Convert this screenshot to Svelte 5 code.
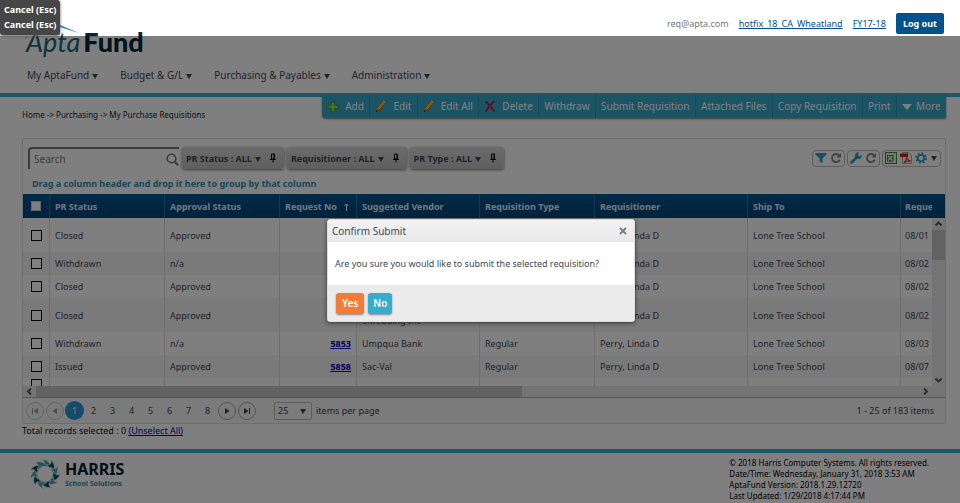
<script>
  const menus = ['My AptaFund', 'Budget & G/L', 'Purchasing & Payables', 'Administration'];
  const actions = [
    { label: 'Add', icon: 'add' },
    { label: 'Edit', icon: 'edit' },
    { label: 'Edit All', icon: 'edit' },
    { label: 'Delete', icon: 'delete' },
    { label: 'Withdraw' },
    { label: 'Submit Requisition' },
    { label: 'Attached Files' },
    { label: 'Copy Requisition' },
    { label: 'Print' },
    { label: 'More', icon: 'more' }
  ];
  const filters = ['PR Status : ALL', 'Requisitioner : ALL', 'PR Type : ALL'];
  const rows = [
    { status: 'Closed', approval: 'Approved', date: '08/01', tall: true },
    { status: 'Withdrawn', approval: 'n/a', date: '08/02' },
    { status: 'Closed', approval: 'Approved', date: '08/02' },
    { status: 'Closed', approval: 'Approved', vendor: 'Shredding Inc', date: '08/02', tall: true },
    { status: 'Withdrawn', approval: 'n/a', no: '5853', vendor: 'Umpqua Bank', type: 'Regular', date: '08/03' },
    { status: 'Issued', approval: 'Approved', no: '5858', vendor: 'Sac-Val', type: 'Regular', date: '08/07' }
  ];
  const pages = [1, 2, 3, 4, 5, 6, 7, 8];
  const blades = Array.from({ length: 11 }, (_, i) => i);
</script>

{#snippet pin()}
  <svg class="pin" width="8" height="10" viewBox="0 0 8 10"><path d="M2.500 1h3v5h-3zM1 6.500h6M4 6.500v3M5 1v5" fill="none" stroke="#000" /></svg>
{/snippet}

{#snippet refresh()}
  <svg width="12" height="12" viewBox="0 0 13 13"><path d="M10.200 4A4.400 4.400 0 1 0 10.600 8.400" fill="none" stroke="#858585" stroke-width="2" /><path d="M12 1v5H7z" fill="#858585" /></svg>
{/snippet}

<div class="page">
  <header>
    <div class="account">
      <span>req@apta.com</span>
      <a href="#site">hotfix_18_CA_Wheatland</a>
      <a href="#year">FY17-18</a>
      <button class="logout">Log out</button>
    </div>
    <div class="logo">
      <span class="apta">Apta</span><span class="fund">Fund</span>
      <svg class="swoosh" width="58" height="26" viewBox="0 0 58 26"><path d="M0 20Q8 6 24 0L54 13 24 4Q8 10 1 17Z" fill="#3d93a8" /></svg>
    </div>
    <nav>
      {#each menus as m}<a href="#menu">{m}<i class="caret"></i></a>{/each}
    </nav>
  </header>

  <div class="subhead">
    <div class="crumbs">Home -&gt; Purchasing -&gt; My Purchase Requisitions</div>
    <div class="actions">
      {#each actions as a}
        <button>
          {#if a.icon === 'add'}
            <svg width="12" height="12" viewBox="0 0 12 12"><path d="M4.300 1h3.400v3.300H11v3.400H7.700V11H4.300V7.700H1V4.300h3.300z" fill="#8fdc55" stroke="#4a9a28" /></svg>
          {:else if a.icon === 'edit'}
            <svg width="12" height="13" viewBox="0 0 12 13"><path d="M1 12l1-4L7.500 1.500l2.500 2L4.500 10z" fill="#f2a81d" stroke="#a86a10" stroke-width=".7" /><path d="M7.500 1.500L8.500 .3l2.500 2-1 1.200z" fill="#e8b8a0" /><path d="M1 12l.5-2 1.500 1z" fill="#222" /><path d="M3 8.500l5.500-6" stroke="#ffe07a" /></svg>
          {:else if a.icon === 'delete'}
            <svg width="12" height="13" viewBox="0 0 12 13"><path d="M1.500 1.500Q6 5 10.500 12M10.500 1Q5 6 1.500 11.500" fill="none" stroke="#d4143c" stroke-width="2" /></svg>
          {:else if a.icon === 'more'}
            <svg width="10" height="6" viewBox="0 0 10 6"><path d="M0 0h10L5 6z" fill="#fff" /></svg>
          {/if}
          <span>{a.label}</span>
        </button>
      {/each}
    </div>
  </div>

  <main>
    <section class="grid">
      <div class="filters">
        <label class="search">
          <input type="text" placeholder="Search" aria-label="Search" />
          <svg width="13" height="13" viewBox="0 0 13 13"><circle cx="5.500" cy="5.500" r="4.300" fill="none" stroke="#777" stroke-width="1.600" /><path d="M8.600 8.600l3.600 3.600" stroke="#777" stroke-width="2" /></svg>
        </label>
        {#each filters as f}
          <button class="chip">{f}<i class="caret"></i>{@render pin()}</button>
        {/each}
        <div class="tools">
          <div class="tool">
            <button aria-label="Filter"><svg width="12" height="12" viewBox="0 0 12 12"><path d="M.5 1h11v1.500L7.500 6.500V11l-3-1.500v-3L.5 2.500z" fill="#2f9fc4" /></svg></button>
            <button aria-label="Clear filter">{@render refresh()}</button>
          </div>
          <div class="tool">
            <button aria-label="Settings"><svg width="12" height="12" viewBox="0 0 12 12"><path d="M1.500 10.500L7 5" stroke="#2f9fc4" stroke-width="2.600" stroke-linecap="round" /><path d="M9.500 .5A3.400 3.400 0 1 0 11.700 3L9.500 4.500 7.700 2.600z" fill="#2f9fc4" /></svg></button>
            <button aria-label="Reset settings">{@render refresh()}</button>
          </div>
          <div class="tool">
            <button aria-label="Export to Excel"><svg width="12" height="12" viewBox="0 0 12 12"><rect x=".5" y=".5" width="11" height="11" fill="#e4f3df" stroke="#3f8f3a" /><path d="M2 3h6.500v6.500H2z" fill="#2e8a2c" /><path d="M3 4l4.500 4.500M7.500 4L3 8.500" stroke="#fff" stroke-width="1.300" /></svg></button>
            <button aria-label="Export to PDF"><svg width="12" height="12" viewBox="0 0 12 12"><path d="M2.500 .5h6l3 3v8h-9z" fill="#f4f4f4" stroke="#aaa" /><path d="M0 1.500h8v3.500H0z" fill="#d8121c" /><path d="M4 10.500Q7 8 6.500 5.500 8 9 10.500 9 7 8.500 4 10.500z" fill="none" stroke="#d8121c" /></svg></button>
            <button aria-label="Options"><svg width="12" height="12" viewBox="-6 -6 12 12"><circle r="3.200" fill="none" stroke="#2f9fc4" stroke-width="1.800" /><circle r="4.900" fill="none" stroke="#2f9fc4" stroke-width="1.800" stroke-dasharray="1.920 1.920" /></svg></button>
            <i class="caret"></i>
          </div>
        </div>
      </div>
      <div class="group">Drag a column header and drop it here to group by that column</div>

      <div class="data">
        <div class="viewport">
          <table>
            <colgroup>
              <col class="c-check" /><col class="c-mid" /><col class="c-mid" /><col class="c-no" /><col class="c-vendor" /><col class="c-mid" /><col class="c-wide" /><col class="c-wide" /><col />
            </colgroup>
            <thead>
              <tr>
                <th><input type="checkbox" aria-label="Select all" /></th>
                <th>PR Status</th>
                <th>Approval Status</th>
                <th class="num">Request No
                  <svg width="5" height="8" viewBox="0 0 5 8"><path d="M2.500 8V1M.5 3l2-2 2 2" fill="none" stroke="#fff" /></svg></th>
                <th>Suggested Vendor</th>
                <th>Requisition Type</th>
                <th>Requisitioner</th>
                <th>Ship To</th>
                <th>Reque</th>
              </tr>
            </thead>
            <tbody>
              {#each rows as r}
                <tr>
                  <td><input type="checkbox" aria-label="Select row" /></td>
                  <td>{r.status}</td>
                  <td>{r.approval}</td>
                  <td class="num">{#if r.no}<a href="#req">{r.no}</a>{/if}</td>
                  <td>{#if r.tall}<br />{/if}{r.vendor ?? ''}{#if r.tall && !r.vendor}<br />{/if}</td>
                  <td>{r.type ?? ''}</td>
                  <td>Perry, Linda D</td>
                  <td>Lone Tree School</td>
                  <td>{r.date}</td>
                </tr>
              {/each}
              <tr>
                <td><input type="checkbox" aria-label="Select row" /></td>
                <td></td><td></td><td></td><td></td><td></td><td></td><td></td><td></td>
              </tr>
            </tbody>
          </table>
        </div>
        <div class="vscroll">
          <div class="cap"></div>
          <svg width="11" height="12" viewBox="0 0 11 12"><path d="M2.500 7.500l3-3 3 3" fill="none" stroke="#555" stroke-width="1.800" /></svg>
          <div class="vthumb"></div>
          <svg width="11" height="12" viewBox="0 0 11 12"><path d="M2.500 4.500l3 3 3-3" fill="none" stroke="#555" stroke-width="1.800" /></svg>
        </div>
      </div>
      <div class="hscroll">
        <svg width="13" height="11" viewBox="0 0 13 11"><path d="M8 2.500l-3 3 3 3" fill="none" stroke="#555" stroke-width="1.800" /></svg>
        <div class="htrack"><div class="hthumb"></div></div>
        <svg width="13" height="11" viewBox="0 0 13 11"><path d="M5 2.500l3 3-3 3" fill="none" stroke="#555" stroke-width="1.800" /></svg>
      </div>
      <div class="pager">
        <button class="round off" aria-label="First page"><svg width="8" height="8" viewBox="0 0 8 8"><path d="M7 1v6L2.500 4zM1 1h1v6H1z" /></svg></button>
        <button class="round off" aria-label="Previous page"><svg width="8" height="8" viewBox="0 0 8 8"><path d="M6 1v6L1.500 4z" /></svg></button>
        {#each pages as p}<button class="page-no" class:current={p === 1}>{p}</button>{/each}
        <button class="round" aria-label="Next page"><svg width="8" height="8" viewBox="0 0 8 8"><path d="M2 1v6l4.500-3z" /></svg></button>
        <button class="round" aria-label="Last page"><svg width="8" height="8" viewBox="0 0 8 8"><path d="M1 1v6l4.500-3zM6 1h1v6H6z" /></svg></button>
        <div class="size">
          <select id="size"><option>25</option></select>
          <i class="caret"></i>
        </div>
        <label for="size">items per page</label>
        <span class="range">1 - 25 of 183 items</span>
      </div>
    </section>
    <p class="total">Total records selected : 0 <a href="#unselect">(Unselect All)</a></p>
  </main>

  <footer>
    <div class="harris">
      <svg width="32" height="32" viewBox="-16 -16 32 32">
        {#each blades as b}
          <path transform="rotate({b * 32.727})" d="M-3 -15Q6 -14 6.500 -4Q3 -9 -4 -8Q2 -11.500 -3 -15Z" fill={b % 2 ? '#0b4a5c' : '#4fa3b5'} stroke="#fff" stroke-width=".6" />
        {/each}
      </svg>
      <div>
        <div class="name">HARRIS</div>
        <div class="sub">School Solutions</div>
      </div>
    </div>
    <div class="legal">
      <div>© 2018 Harris Computer Systems. All rights reserved.</div>
      <div>Date/Time: Wednesday, January 31, 2018 3:53 AM</div>
      <div>AptaFund Version: 2018.1.29.12720</div>
      <div>Last Updated: 1/29/2018 4:17:44 PM</div>
    </div>
  </footer>
</div>

<div class="shade"></div>

<div class="dialog" role="dialog" aria-labelledby="dlg-title">
  <div class="dlg-head">
    <span id="dlg-title">Confirm Submit</span>
    <button aria-label="Close"><svg width="8" height="8" viewBox="0 0 8 8"><path d="M1 1l6 6M7 1L1 7" stroke="#777d85" stroke-width="1.800" /></svg></button>
  </div>
  <div class="dlg-body">Are you sure you would like to submit the selected requisition?</div>
  <div class="dlg-foot"><button class="yes">Yes</button><button class="no">No</button></div>
</div>

<div class="tip"><div>Cancel (Esc)</div><div>Cancel (Esc)</div></div>

<style>
  :global(body) { background: #fff; }
  .page, .dialog, .tip { font-family: "Noto Sans", "Open Sans", sans-serif; font-size: 9px; line-height: 11px; color: #414853; }
  button, input, select { font: inherit; color: inherit; margin: 0; box-sizing: border-box; }
  button { border: 0; padding: 0; background: none; display: flex; align-items: center; cursor: pointer; }
  svg { display: block; flex: none; }
  .caret { display: inline-block; border: 3px solid transparent; border-top: 5px solid currentColor; border-bottom: 0; margin: 2px 0 0 3px; flex: none; }

  header { position: relative; border-bottom: 4px solid #3aaed0; }
  .account { display: flex; justify-content: flex-end; align-items: center; gap: 10px; padding: 13px 16px 0 0; height: 21px; }
  .account span { color: #777; }
  .account a { color: #00528c; }
  .logout { height: 21px; padding: 0 7px; background: #00528c; color: #fff; font-weight: 700; border-radius: 2px; }
  .logo { position: absolute; left: 26px; top: 31px; display: flex; gap: 3px; font: 27px/22px Lato, sans-serif; }
  .apta { font-style: italic; color: #14687c; }
  .fund { font-weight: 900; color: #00283c; }
  .swoosh { position: absolute; left: -1px; top: -11px; }
  nav { display: flex; align-items: flex-start; gap: 22px; padding: 34px 27px 0; font-size: 10px; line-height: 14px; height: 25px; }
  nav a { display: flex; align-items: center; color: inherit; text-decoration: none; }

  .subhead { display: flex; justify-content: space-between; align-items: flex-start; padding: 0 14px 0 22px; }
  .crumbs { padding-top: 12px; font-size: 8px; color: #222; white-space: nowrap; }
  .actions { display: flex; width: 65vw; height: 23px; margin-top: -2px; position: relative; background: #36a8cb; border-radius: 0 0 0 4px; box-shadow: 0 1px 2px #777; font-size: 10px; color: #fff; }
  .actions button { flex: auto; justify-content: center; gap: 6px; border-left: 1px solid #2e93b4; white-space: nowrap; }
  .actions button:first-child { border-left: 0; }
  .actions button:last-child { gap: 4px; }

  main { padding: 18px 14px 0 22px; }
  .grid { border: 1px solid #ddd; border-radius: 2px; }
  .filters { display: flex; align-items: center; gap: 3px; padding: 8px 4px 0 5px; }
  .search { display: flex; align-items: center; width: 151px; height: 22px; box-sizing: border-box; border: 2px solid #777; border-width: 2px 0 0 2px; border-radius: 4px 0 0 0; font-size: 10px; }
  .search input { flex: 1; min-width: 0; height: 18px; border: 0; padding: 0 4px; background: none; outline: 0; }
  .search input::placeholder { color: #777; opacity: 1; }
  .chip { height: 22px; padding: 0 7px 0 4px; background: linear-gradient(#d8d8d8, #bdbdbd); border-radius: 3px; box-shadow: 0 1px 3px #777; font-weight: 700; white-space: nowrap; }
  .pin { margin-left: 8px; }
  .tools { display: flex; gap: 2px; margin-left: auto; }
  .tool { display: flex; align-items: center; gap: 3px; height: 17px; padding: 0 2px; box-sizing: border-box; border: 1px solid #bbb; border-radius: 4px; }
  .tool .caret { margin: 0 1px; }
  .group { padding: 9px 9px 5px; font-weight: 700; color: #2f8fb0; }

  .data { display: flex; height: 192px; }
  .viewport { flex: 1; min-width: 0; overflow: hidden; }
  table { width: 100%; table-layout: fixed; border-collapse: separate; border-spacing: 0; }
  .c-check { width: 26px; }
  .c-mid { width: 115px; }
  .c-no { width: 77px; }
  .c-vendor { width: 123px; }
  .c-wide { width: 153px; }
  th, td { padding: 6px 5px; text-align: left; vertical-align: middle; white-space: nowrap; overflow: hidden; border-left: 1px solid #ddd; box-sizing: border-box; }
  th { height: 24px; padding: 0 5px; background: linear-gradient(#00568f, #004478); border-color: #2f6fa0; color: #e8eef4; }
  th:first-child, td:first-child { border-left: 0; padding: 0; }
  th:last-child, td:last-child { padding-right: 0; padding-left: 4px; }
  tbody tr:nth-child(even) { background: #f4f4f4; }
  .num { text-align: right; }
  th.num { padding-right: 8px; }
  th.num svg { display: inline-block; vertical-align: -1px; margin-left: 5px; }
  td a, .total a { color: #00c; }
  td a { font-weight: 700; }
  input[type="checkbox"] { appearance: none; display: block; width: 11px; height: 11px; margin: 0 auto; border: 1px solid #111; background: #fff; }
  th input[type="checkbox"] { width: 10px; height: 10px; border-color: #ccc; }
  .vscroll { display: flex; flex-direction: column; width: 13px; background: #e8e8e8; align-items: center; }
  .cap { align-self: stretch; height: 24px; background: linear-gradient(#00568f, #004478); }
  .vthumb { align-self: stretch; height: 30px; background: #c4c4c4; margin-bottom: auto; }
  .hscroll { display: flex; align-items: center; padding-right: 13px; background: #e8e8e8; border-bottom: 1px solid #aaa; }
  .htrack { flex: 1; }
  .hthumb { width: 55%; height: 11px; background: #c4c4c4; }
  .pager { display: flex; align-items: center; height: 25px; padding: 0 11px 0 2px; background: #f6f6f6; }
  .round { width: 18px; height: 18px; margin: 0 1px; justify-content: center; border: 1px solid #aaa; border-radius: 50%; fill: #444; }
  .round.off { fill: #999; border-color: #ccc; }
  .page-no { width: 19px; height: 19px; justify-content: center; }
  .current { background: #2f93d0; color: #fff; border-radius: 50%; }
  .size { display: flex; align-items: center; width: 38px; height: 18px; margin: 0 4px 0 17px; border: 1px solid #bbb; border-radius: 2px; box-sizing: border-box; }
  .size select { flex: 1; min-width: 0; appearance: none; border: 0; background: none; padding: 0 0 0 3px; }
  .size .caret { margin-right: 5px; }
  .range { margin-left: auto; }
  .total { margin: 0; padding: 1px 0 13px; color: #111; }

  footer { display: flex; justify-content: space-between; padding: 4px 31px 0; border-top: 4px solid #3aaed0; }
  .harris { display: flex; gap: 4px; padding-top: 1px; margin-left: -2px; }
  .name { font-size: 16px; line-height: 22px; font-weight: 700; color: #06202c; }
  .sub { font-size: 7px; line-height: 7px; font-weight: 700; color: #2f8ba2; }
  .legal { font-size: 8px; line-height: 11px; color: #000; }

  .shade { position: absolute; left: 0; right: 0; top: 36px; height: calc(100vh - 36px); background: rgba(0, 0, 0, 0.5); }
  .dialog { position: absolute; top: 219px; left: 50%; width: 308px; margin-left: -153px; background: #fff; border: 1px solid #ddd; border-radius: 3px; box-shadow: 0 1px 4px #333; box-sizing: border-box; overflow: hidden; }
  .dlg-head { display: flex; align-items: center; justify-content: space-between; padding: 0 7px 0 4px; height: 22px; background: linear-gradient(#f3f3f3, #e8e8e8); font-size: 10px; }
  .dlg-body { padding: 16px 7px; }
  .dlg-foot { display: flex; gap: 4px; padding: 8px 8px 7px; background: #ebebeb; }
  .dlg-foot button { height: 21px; padding: 0 5px; font-size: 10px; font-weight: 600; color: #fff; border-radius: 3px; box-shadow: 0 1px 2px #888; }
  .dlg-foot .yes { background: #f47c36; padding: 0 6px; }
  .no { background: #36accf; }
  .tip { position: absolute; left: 0; top: 0; padding: 2px 4px 3px; background: #464646; border-radius: 0 3px 3px 3px; box-shadow: 0 1px 3px #555; color: #fff; font-weight: 700; line-height: 15px; }
</style>
